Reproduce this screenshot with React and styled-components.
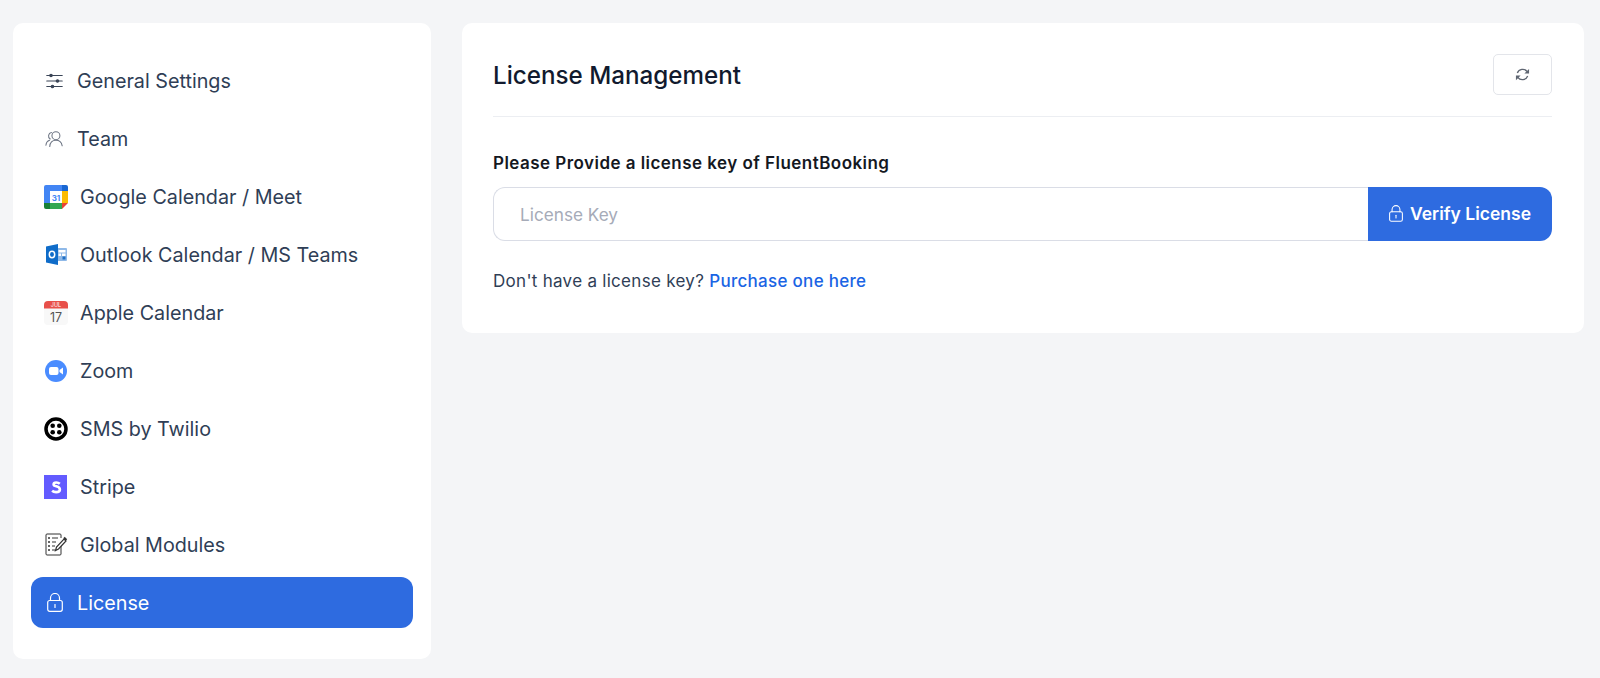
import React from 'react'
import styled, { createGlobalStyle } from 'styled-components'

const GlobalStyle = createGlobalStyle`
  html, body { margin: 0; padding: 0; }
  body {
    background: #f4f5f7;
    font-family: Inter, "Noto Sans", sans-serif;
    color: #2c3a51;
  }
`

const Page = styled.div`
  display: flex;
  align-items: flex-start;
  gap: 31px;
  padding: 23px 16px 19px 13px;
  height: 678px;
  box-sizing: border-box;
`

const Sidebar = styled.nav`
  width: 418px;
  height: 636px;
  box-sizing: border-box;
  flex: none;
  background: #fff;
  border-radius: 10px;
  padding: 32px 18px 0;
  display: flex;
  flex-direction: column;
  gap: 7px;
`

const Item = styled.a`
  display: flex;
  align-items: center;
  height: 51px;
  padding-left: ${p => (p.$brand ? '13px' : '14px')};
  gap: ${p => (p.$brand ? '12px' : '13px')};
  border-radius: 12px;
  font-size: 19.75px;
  background: ${p => (p.$active ? '#2e6be0' : 'transparent')};
  color: ${p => (p.$active ? '#fff' : '#2f3e56')};
`

const IconBox = styled.span`
  flex: none;
  display: flex;
  align-items: center;
  justify-content: center;
  width: ${p => (p.$brand ? '24px' : '19px')};
  height: 24px;
`

const Main = styled.main`
  flex: 1;
  background: #fff;
  border-radius: 10px;
  height: 310px;
  box-sizing: border-box;
  padding: 31px 32px 0 31px;
`

const Header = styled.header`
  display: flex;
  align-items: center;
  justify-content: space-between;
  height: 41px;
  padding-bottom: 21px;
  border-bottom: 1px solid #eceef2;
`

const Title = styled.h1`
  margin: 0;
  padding-top: 2px;
  font-size: 24.2px;
  font-weight: 500;
  color: #111a2e;
`

const RefreshButton = styled.button`
  width: 59px;
  height: 41px;
  display: flex;
  align-items: center;
  justify-content: center;
  background: #fff;
  border: 1px solid #e3e5ea;
  border-radius: 5px;
  padding: 0;
  color: #5f6672;
`

const Label = styled.label`
  display: block;
  margin-top: 36px;
  font-size: 17px;
  letter-spacing: 0.46px;
  font-weight: 600;
  line-height: 20px;
  color: #14181f;
`

const KeyRow = styled.div`
  display: flex;
  margin-top: 14px;
  height: 54px;
`

const KeyInput = styled.input`
  flex: 1;
  min-width: 0;
  box-sizing: border-box;
  border: 1px solid #dadde6;
  border-right: none;
  border-radius: 12px 0 0 12px;
  padding: 1px 26px 0;
  font: 400 17.2px Inter, sans-serif;
  color: #2c3a51;
  outline: none;
  &::placeholder { color: #a6abb8; opacity: 1; }
`

const VerifyButton = styled.button`
  flex: none;
  width: 184px;
  display: flex;
  align-items: center;
  justify-content: center;
  gap: 7px;
  border: none;
  border-radius: 0 12px 12px 0;
  background: #2e6be0;
  color: #fff;
  font: 600 17.5px Inter, sans-serif;
  padding: 0 0 2px;
`

const Hint = styled.p`
  margin: 30px 0 0;
  font-size: 17px;
  letter-spacing: 0.29px;
  line-height: 20px;
  color: #2f3e56;
`

const HintLink = styled.a`
  color: #1a64e4;
  font-weight: 500;
`

const Sliders = () => (
  <svg width="17" height="16" viewBox="0 0 17 16" fill="none" stroke="#3a4557" strokeWidth="1.2" strokeLinecap="round">
    <path d="M.8 2.500h15.400M.8 8h15.400M.8 13.500h15.400" />
    <circle cx="5" cy="2.500" r="1.200" fill="#3a4557" />
    <circle cx="11.500" cy="8" r="1.200" fill="#3a4557" />
    <circle cx="6.500" cy="13.500" r="1.200" fill="#3a4557" />
  </svg>
)

const TeamIcon = () => (
  <svg width="20" height="18" viewBox="0 0 20 18" fill="none" stroke="#6d7584" strokeWidth="1.1" strokeLinecap="round">
    <circle cx="11.500" cy="5.500" r="4.200" />
    <path d="M5 17c.3-4 2.800-6.600 6.500-6.600s6 2.600 6.600 5.800" />
    <path d="M6.800 2.200A3.700 3.700 0 0 0 5.500 9M1 15.500C1.200 12.800 2.600 11 4.800 10.300" />
  </svg>
)

const LockIcon = ({ width = 16, height = 19 }) => (
  <svg width={width} height={height} viewBox="0 0 16 19" fill="none" stroke="#fff" strokeWidth="1.2" strokeLinecap="round">
    <rect x=".7" y="7.500" width="14.600" height="10.800" rx="2" />
    <path d="M3.500 7.500V5a4.500 4.500 0 0 1 9 0v2.500" />
    <path d="M8 11.500v3" />
  </svg>
)

const GoogleIcon = () => (
  <svg width="24" height="24" viewBox="0 0 24 24">
    <path d="M2 0h16v6H6v12H0V2a2 2 0 0 1 2-2z" fill="#4285f4" />
    <path d="M18 0h4a2 2 0 0 1 2 2v4h-6z" fill="#1967d2" />
    <path d="M18 6h6v12h-6z" fill="#fbbc04" />
    <path d="M6 18h12v6H6z" fill="#34a853" />
    <path d="M0 18h6v6H2a2 2 0 0 1-2-2z" fill="#188038" />
    <path d="M18 18h6l-6 6z" fill="#ea4335" />
    <rect x="6" y="6" width="12" height="12" fill="#fff" />
    <text x="12" y="15.500" fontFamily="Inter, sans-serif" fontSize="8" fontWeight="700" textAnchor="middle" fill="#4285f4">31</text>
  </svg>
)

const OutlookIcon = () => (
  <svg width="21" height="21" viewBox="0 0 21 21">
    <rect x="10" y="4" width="11" height="13" rx="1" fill="#8fb9e8" />
    <path d="M12.500 6h7v2.500h-7zM12.500 9.500h2.500V12h-2.500zM16 9.500h3.500V12H16z" fill="#fff" />
    <path d="M16.500 12.500h3v3h-3z" fill="#1f6fc4" />
    <path d="M0 2.500 12 0v21L0 18.500z" fill="#0f6cc9" />
    <ellipse cx="6" cy="10.500" rx="2.700" ry="3.200" fill="none" stroke="#fff" strokeWidth="1.500" />
  </svg>
)

const AppleIcon = () => (
  <svg width="24" height="24" viewBox="0 0 24 24">
    <rect width="24" height="24" rx="4" fill="#f8f8f8" />
    <path d="M4 0h16a4 4 0 0 1 4 4v3.500H0V4a4 4 0 0 1 4-4z" fill="#e8504a" />
    <text x="12" y="5.800" fontFamily="Inter, sans-serif" fontSize="5.500" textAnchor="middle" fill="#fff">JUL</text>
    <text x="12" y="20.500" fontFamily="Inter, sans-serif" fontSize="12.500" textAnchor="middle" fill="#555">17</text>
  </svg>
)

const ZoomIcon = () => (
  <svg width="22" height="22" viewBox="0 0 22 22">
    <circle cx="11" cy="11" r="11" fill="#4a8cff" />
    <rect x="4" y="7" width="9.500" height="8" rx="2" fill="#fff" />
    <path d="M14.500 10 18 7.500v7L14.500 12z" fill="#fff" />
  </svg>
)

const TwilioIcon = () => (
  <svg width="24" height="24" viewBox="0 0 24 24">
    <circle cx="12" cy="12" r="10" fill="#fff" stroke="#000" strokeWidth="3.500" />
    <circle cx="8.700" cy="8.700" r="2.300" />
    <circle cx="15.300" cy="8.700" r="2.300" />
    <circle cx="8.700" cy="15.300" r="2.300" />
    <circle cx="15.300" cy="15.300" r="2.300" />
  </svg>
)

const StripeIcon = () => (
  <svg width="24" height="24" viewBox="0 0 24 24">
    <rect width="23" height="24" fill="#635bff" />
    <path d="M15.800 8.800c-.9-.8-2.200-1.300-3.500-1.300-1.600 0-2.700.7-2.700 1.900 0 2.600 6.300 1.300 6.300 5 0 1.700-1.600 2.700-3.800 2.700-1.500 0-3-.5-4-1.400" fill="none" stroke="#fff" strokeWidth="2.600" />
  </svg>
)

const ModulesIcon = () => (
  <svg width="23" height="23" viewBox="0 0 23 23" fill="none" stroke="#333" strokeWidth="1">
    <path d="M16 11v10a1 1 0 0 1-1 1H2a1 1 0 0 1-1-1V2a1 1 0 0 1 1-1h13a1 1 0 0 1 1 1v3" />
    <path d="M7 5h6M7 9h4M7 13h3M7 17h3" />
    <path d="M3 5h2M3 9h2M3 13h2M3 17h2" strokeWidth="1.500" />
    <path d="M10.500 17.500l1-3.500 7.500-8 2 2-7.500 8z" fill="#fff" strokeWidth="1.200" />
    <path d="M19 4.500l2.500 2.500" strokeWidth="2" />
  </svg>
)

const RefreshIcon = () => (
  <svg width="15" height="15" viewBox="0 0 16 16" fill="none" stroke="currentColor" strokeWidth="1.400">
    <path d="M2.500 6.500A6 6 0 0 1 13 5" />
    <path d="M13.500 9.500A6 6 0 0 1 3 11" />
    <path d="M15 2v5h-5z" fill="currentColor" stroke="none" />
    <path d="M1 14V9h5z" fill="currentColor" stroke="none" />
  </svg>
)

const menu = [
  { label: 'General Settings', icon: <Sliders /> },
  { label: 'Team', icon: <TeamIcon /> },
  { label: 'Google Calendar / Meet', icon: <GoogleIcon />, brand: true },
  { label: 'Outlook Calendar / MS Teams', icon: <OutlookIcon />, brand: true },
  { label: 'Apple Calendar', icon: <AppleIcon />, brand: true },
  { label: 'Zoom', icon: <ZoomIcon />, brand: true },
  { label: 'SMS by Twilio', icon: <TwilioIcon />, brand: true },
  { label: 'Stripe', icon: <StripeIcon />, brand: true },
  { label: 'Global Modules', icon: <ModulesIcon />, brand: true },
  { label: 'License', icon: <LockIcon />, active: true },
]

export default function App() {
  return (
    <>
      <GlobalStyle />
      <Page>
        <Sidebar>
          {menu.map(item => (
            <Item key={item.label} $brand={item.brand} $active={item.active}>
              <IconBox $brand={item.brand}>{item.icon}</IconBox>
              {item.label}
            </Item>
          ))}
        </Sidebar>
        <Main>
          <Header>
            <Title>License Management</Title>
            <RefreshButton aria-label="Refresh"><RefreshIcon /></RefreshButton>
          </Header>
          <Label>Please Provide a license key of FluentBooking</Label>
          <KeyRow>
            <KeyInput placeholder="License Key" />
            <VerifyButton><LockIcon width={14} height={17} />Verify License</VerifyButton>
          </KeyRow>
          <Hint>Don't have a license key? <HintLink>Purchase one here</HintLink></Hint>
        </Main>
      </Page>
    </>
  )
}
